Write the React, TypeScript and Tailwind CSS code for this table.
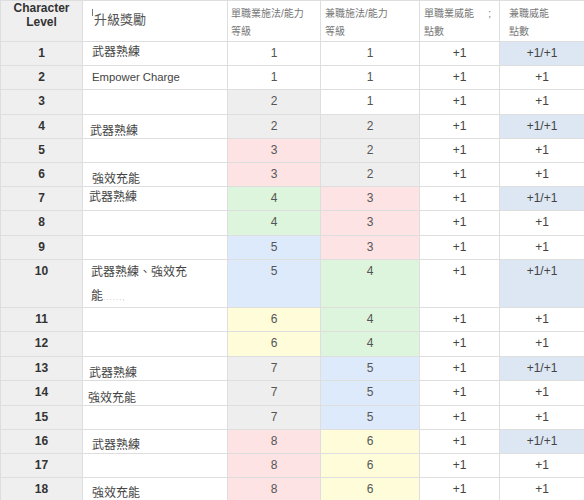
import React from 'react'

type Tint = 'w' | 'g' | 'r' | 'gr' | 'b' | 'y'

const tintClass: Record<Tint, string> = {
  w: 'bg-white',
  g: 'bg-[#eeeeee]',
  r: 'bg-[#fde3e3]',
  gr: 'bg-[#ddf5dc]',
  b: 'bg-[#dceafb]',
  y: 'bg-[#fefcd9]',
}

type Row = {
  lv: number
  reward?: string
  rewardPad?: string
  solo: number
  soloTint: Tint
  multi: number
  multiTint: Tint
  both?: boolean
  tall?: boolean
}

// 每列資料：等級、獎勵文字、施法等級與底色
const rows: Row[] = [
  { lv: 1, reward: '武器熟練', rewardPad: 'pt-[3px] pl-[9px]', solo: 1, soloTint: 'w', multi: 1, multiTint: 'w', both: true },
  { lv: 2, reward: 'Empower Charge', rewardPad: 'pt-[4px] pl-[9px]', solo: 1, soloTint: 'w', multi: 1, multiTint: 'w' },
  { lv: 3, solo: 2, soloTint: 'g', multi: 1, multiTint: 'w' },
  { lv: 4, reward: '武器熟練', rewardPad: 'pt-[9px] pl-[7px]', solo: 2, soloTint: 'g', multi: 2, multiTint: 'g', both: true },
  { lv: 5, solo: 3, soloTint: 'r', multi: 2, multiTint: 'g' },
  { lv: 6, reward: '強效充能', rewardPad: 'pt-[9px] pl-[9px]', solo: 3, soloTint: 'r', multi: 2, multiTint: 'g' },
  { lv: 7, reward: '武器熟練', rewardPad: 'pt-[3px] pl-[6px]', solo: 4, soloTint: 'gr', multi: 3, multiTint: 'r', both: true },
  { lv: 8, solo: 4, soloTint: 'gr', multi: 3, multiTint: 'r' },
  { lv: 9, solo: 5, soloTint: 'b', multi: 3, multiTint: 'r' },
  { lv: 10, reward: '武器熟練、強效充', rewardPad: 'pt-[4px] pl-[8px]', solo: 5, soloTint: 'b', multi: 4, multiTint: 'gr', both: true, tall: true },
  { lv: 11, solo: 6, soloTint: 'y', multi: 4, multiTint: 'gr' },
  { lv: 12, solo: 6, soloTint: 'y', multi: 4, multiTint: 'gr' },
  { lv: 13, reward: '武器熟練', rewardPad: 'pt-[9px] pl-[6px]', solo: 7, soloTint: 'g', multi: 5, multiTint: 'b', both: true },
  { lv: 14, reward: '強效充能', rewardPad: 'pt-[10px] pl-[5px]', solo: 7, soloTint: 'g', multi: 5, multiTint: 'b' },
  { lv: 15, solo: 7, soloTint: 'g', multi: 5, multiTint: 'b' },
  { lv: 16, reward: '武器熟練', rewardPad: 'pt-[8px] pl-[9px]', solo: 8, soloTint: 'r', multi: 6, multiTint: 'y', both: true },
  { lv: 17, solo: 8, soloTint: 'r', multi: 6, multiTint: 'y' },
  { lv: 18, reward: '強效充能', rewardPad: 'pt-[8px] pl-[9px]', solo: 8, soloTint: 'r', multi: 6, multiTint: 'y' },
]

const cell = 'border border-[#dedede] align-top p-0'

const App = () => {
  return (
    <div className="w-[584px] h-[500px] overflow-hidden bg-white font-['Liberation_Sans','Noto_Sans_CJK_TC',sans-serif]">
      <table className="w-[584px] table-fixed border-collapse">
        <colgroup>
          <col className="w-[82px]" />
          <col className="w-[145px]" />
          <col className="w-[93px]" />
          <col className="w-[99px]" />
          <col className="w-[80px]" />
          <col className="w-[85px]" />
        </colgroup>
        <thead>
          <tr className="h-[39px]">
            <th className={`${cell} bg-[#efefef] align-middle text-center text-[12px] leading-[14px] font-bold text-[#333]`}>
              Character
              <br />
              Level
            </th>
            <th className={`${cell} bg-white text-left font-normal`}>
              <div className="flex items-start pt-[11px] pl-[9px] text-[13px] leading-[16px] text-[#555]">
                <span className="mt-[-3px] mr-[1px] h-[7px] w-px bg-[#777]" />
                升級獎勵
              </div>
            </th>
            <th className={`${cell} bg-white text-left font-normal`}>
              <div className="pt-[4px] pl-[3px] text-[10px] leading-[18px] text-[#777]">
                單職業施法/能力
                <br />
                等級
              </div>
            </th>
            <th className={`${cell} bg-white text-left font-normal`}>
              <div className="pt-[4px] pl-[4px] text-[10px] leading-[18px] text-[#777]">
                兼職施法/能力
                <br />
                等級
              </div>
            </th>
            <th className={`${cell} bg-white text-left font-normal`}>
              <div className="pt-[4px] pl-[4px] text-[10px] leading-[18px] text-[#777]">
                <div className="flex justify-between pr-[8px]">
                  <span>單職業威能</span>
                  <span>;</span>
                </div>
                點數
              </div>
            </th>
            <th className={`${cell} bg-white text-left font-normal`}>
              <div className="pt-[4px] pl-[9px] text-[10px] leading-[18px] text-[#777]">
                兼職威能
                <br />
                點數
              </div>
            </th>
          </tr>
        </thead>
        <tbody>
          {rows.map((r) => (
            <tr key={r.lv} className={r.tall ? 'h-[48.5px]' : 'h-[24.2px]'}>
              <td className={`${cell} bg-[#efefef] text-center text-[12px] leading-[16px] font-bold text-[#333]`}>
                <div className="pt-[3px]">{r.lv}</div>
              </td>
              <td className={`${cell} bg-white`}>
                {r.reward && (
                  <div
                    className={`${r.rewardPad} ${
                      r.tall ? 'leading-[24px]' : 'leading-[14px]'
                    } ${r.lv === 2 ? 'text-[11.3px]' : 'text-[12px]'} text-[#444]`}
                  >
                    {r.tall ? (
                      <>
                        <div className="leading-[16px]">{r.reward}</div>
                        <div className="leading-[16px] mt-[8px]">
                          能<span className="text-[#bbb] text-[8px] tracking-[1px]">......,</span>
                        </div>
                      </>
                    ) : (
                      r.reward
                    )}
                  </div>
                )}
              </td>
              <td className={`${cell} ${tintClass[r.soloTint]} text-center text-[12px] leading-[16px] text-[#555]`}>
                <div className="pt-[3px]">{r.solo}</div>
              </td>
              <td className={`${cell} ${tintClass[r.multiTint]} text-center text-[12px] leading-[16px] text-[#555]`}>
                <div className="pt-[3px]">{r.multi}</div>
              </td>
              <td className={`${cell} bg-white text-center text-[12px] leading-[16px] text-[#444]`}>
                <div className="pt-[3px]">+1</div>
              </td>
              <td
                className={`${cell} ${
                  r.both ? 'bg-[#dde7f3]' : 'bg-white'
                } text-center text-[12px] leading-[16px] text-[#444]`}
              >
                <div className="pt-[3px]">{r.both ? '+1/+1' : '+1'}</div>
              </td>
            </tr>
          ))}
        </tbody>
      </table>
    </div>
  )
}

export default App
